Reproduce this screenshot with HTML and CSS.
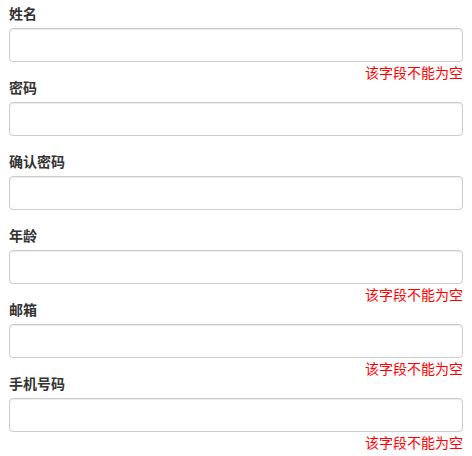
FILE: index.html
```html
<!DOCTYPE html>
<html lang="zh-CN">
<head>
<meta charset="utf-8">
<title>表单</title>
<link rel="stylesheet" href="styles.css">
</head>
<body>
<form class="form">
  <div class="group">
    <label class="label">姓名</label>
    <div class="field">
      <input class="input" type="text">
      <span class="error">该字段不能为空</span>
    </div>
  </div>
  <div class="group">
    <label class="label">密码</label>
    <div class="field">
      <input class="input" type="password">
    </div>
  </div>
  <div class="group">
    <label class="label">确认密码</label>
    <div class="field">
      <input class="input" type="password">
    </div>
  </div>
  <div class="group">
    <label class="label">年龄</label>
    <div class="field">
      <input class="input" type="text">
      <span class="error">该字段不能为空</span>
    </div>
  </div>
  <div class="group">
    <label class="label">邮箱</label>
    <div class="field">
      <input class="input" type="text">
      <span class="error">该字段不能为空</span>
    </div>
  </div>
  <div class="group">
    <label class="label">手机号码</label>
    <div class="field">
      <input class="input" type="text">
      <span class="error">该字段不能为空</span>
    </div>
  </div>
</form>
</body>
</html>
```
FILE: styles.css
```css
html, body {
  margin: 0;
  padding: 0;
  background: #fff;
}
body {
  font-family: "Noto Sans CJK SC", "Liberation Sans", sans-serif;
  font-size: 14px;
  line-height: 20px;
  color: #333;
}
.form {
  padding: 3px 9px 9px 9px;
}
.group {
  display: flex;
  flex-direction: column;
  margin-bottom: 15px;
}
.group:last-child {
  margin-bottom: 0;
  padding-bottom: 15px;
}
.label {
  font-weight: bold;
  margin-bottom: 5px;
  line-height: 20px;
}
.field {
  position: relative;
}
.input {
  display: block;
  box-sizing: border-box;
  width: 100%;
  height: 34px;
  margin: 0;
  padding: 6px 12px;
  border: 1px solid #ccc;
  border-radius: 4px;
  background: #fff;
  box-shadow: inset 0 1px 1px rgba(0, 0, 0, 0.075);
  font: inherit;
  outline: none;
}
.error {
  position: absolute;
  right: 0;
  top: 100%;
  color: #f00;
  font-weight: normal;
  line-height: 20px;
  white-space: nowrap;
}
```
